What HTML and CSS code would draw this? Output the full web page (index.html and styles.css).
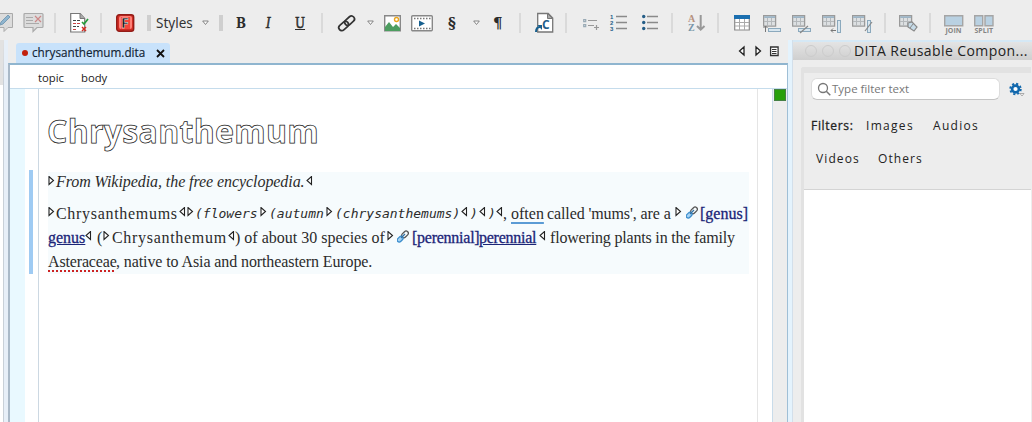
FILE: index.html
```html
<!DOCTYPE html>
<html lang="en">
<head>
<meta charset="utf-8">
<title>chrysanthemum.dita</title>
<link rel="stylesheet" href="styles.css">
</head>
<body>
<svg class="defs" width="0" height="0">
  <defs>
    <symbol id="open" viewBox="0 0 7 10"><path d="M1 .5v8l4.500-4z" fill="#fff" stroke="#222" stroke-width="1.100"/></symbol>
    <symbol id="close" viewBox="0 0 7 10"><path d="M5.500.5v8L1 4.500z" fill="#fff" stroke="#222" stroke-width="1.100"/></symbol>
    <symbol id="caret" viewBox="0 0 7 24"><path d="M.7 10h5.600L3.500 13.500z" fill="#fff" stroke="#777" stroke-width=".9"/></symbol>
    <symbol id="chain" viewBox="0 0 12 13"><g fill="none" stroke-width="1.300"><rect x="4" y="2" width="7.500" height="4.500" rx="2.200" transform="rotate(-45 8 4)" stroke="#555"/><rect x="0" y="6.500" width="6.500" height="4" rx="2" transform="rotate(-45 4 9)" stroke="#3b8dcc" fill="#a5d3f5"/><path d="M4 8l4-4" stroke="#3273a6"/></g></symbol>
    <symbol id="minitable" viewBox="0 0 14 12"><path d="M.6.6h12v10.500H.6z" fill="#dde0e2" stroke="#9a9a9a" stroke-width="1.300"/><path d="M1.200 1.200h10.800v1.800H1.200z" fill="#9db5c6"/><path d="M1 6.500h11M4.500 3v8M8.500 3v8" stroke="#b4b8bb"/></symbol>
  </defs>
</svg>
<div class="app">
  <header class="toolbar">
    <svg width="14" height="24"><path d="M-2 2.500h14.500v14H8l-4 4v-4h-6z" fill="#dcdcdc" stroke="#aaa"/><path d="M0 14l1-3 7-7 2 2-7 7z" fill="#8fb5cf" stroke="#7a9db5"/></svg>
    <svg width="21" height="24"><path d="M2 2.500h17q1 0 1 1v12q0 1-1 1h-5l-4 4v-4H2q-1 0-1-1v-12q0-1 1-1z" fill="#dcdcdc" stroke="#aaa" stroke-width="1.200"/><path d="M3 6.500h7M3 9.500h7M3 12.500h13" stroke="#aaa"/><path d="M12 5l6 6M18 5l-6 6" stroke="#c88" stroke-width="1.200"/></svg>
    <i class="sep"></i>
    <svg width="19" height="24"><path d="M.7 2.500h9.500l4.500 5v13.500H.7z" fill="#fff" stroke="#777" stroke-width="1.200"/><path d="M10 2.500v5h5" fill="#aaa" stroke="#777"/><path d="M3 9.500h3M7 9.500h3M3 15.500h3M7 15.500h2" stroke="#444"/><path d="M3 12.500h3M7 12.500h3M3 18.500h3" stroke="#c44"/><path d="M12 11l2 2 4-5" fill="none" stroke="#259b3b" stroke-width="1.700"/><path d="M12 16l4 4M16 16l-4 4" stroke="#d22c23" stroke-width="1.500"/></svg>
    <i class="sep"></i>
    <svg width="19" height="24"><rect x=".7" y="3.700" width="17" height="16.500" rx="2.500" fill="#cf2c24" stroke="#941d18" stroke-width="1.400"/><rect x="3" y="5" width="13" height="13" rx="2" fill="#ff8076"/><rect x="5" y="6" width="9" height="12" fill="#f3463c"/><text x="5" y="17" class="f-letter">F</text></svg>
    <i class="sep wide"></i>
    <span class="styles">Styles</span>
    <svg width="7" height="24"><use href="#caret"/></svg>
    <i class="sep wide"></i>
    <b class="fmt">B</b>
    <b class="fmt it">I</b>
    <b class="fmt un">U</b>
    <i class="sep"></i>
    <svg width="18" height="24"><g transform="rotate(-42 9 12)" fill="none" stroke="#333" stroke-width="1.700"><rect x="-1" y="9" width="11" height="6" rx="3"/><rect x="7" y="9" width="11" height="6" rx="3"/></g></svg>
    <svg width="7" height="24"><use href="#caret"/></svg>
    <svg width="18" height="24"><path d="M.7 4.700h15.600v15H.7z" fill="#fff" stroke="#888" stroke-width="1.400"/><path d="M1 18v-2l4-5 4 5 3-3 4 4v3H1z" fill="#4d9d60"/><circle cx="12.500" cy="8.500" r="2" fill="#fff" stroke="#eba51c" stroke-width="1.400"/></svg>
    <svg width="23" height="24"><rect x=".7" y="4.700" width="20.600" height="15" rx="1" fill="#fff" stroke="#888" stroke-width="1.400"/><path d="M3 7.500h17M3 17.500h17" stroke="#777" stroke-width="1.500" stroke-dasharray="1.500 1.500"/><path d="M8 9.500l6 3-6 3z" fill="#17608f"/></svg>
    <b class="fmt sect">§</b>
    <svg width="7" height="24"><use href="#caret"/></svg>
    <b class="fmt sect">¶</b>
    <i class="sep"></i>
    <svg width="18" height="24"><path d="M1.700 2.500h10.500l4.500 4.500v14H1.700z" fill="#fff" stroke="#777" stroke-width="1.300"/><path d="M11.500 2.500v5h5z" fill="#aaa" stroke="#777"/><path d="M0 21q0-5 4-5" fill="none" stroke="#17608f" stroke-width="2"/><path d="M1.500 14H6v5z" fill="#17608f"/><text x="6" y="18" class="c-letter">C</text></svg>
    <i class="sep"></i>
    <svg width="17" height="24"><path d="M.7 8.700h2v2h-2zM.7 13.700h2v2h-2z" fill="none" stroke="#9aabb6" stroke-width="1.200"/><path d="M5 9.500h9M5 14.500h6M11 16.500h5M13.500 14v5" stroke="#999" stroke-width="1.200"/></svg>
    <svg width="18" height="24"><path d="M6 5.500h11M6 11.500h11M6 17.500h11" stroke="#8a8a8a" stroke-width="1.300"/><g class="nums"><text x="0" y="8">1</text><text x="0" y="14">2</text><text x="0" y="20">3</text></g></svg>
    <svg width="17" height="24"><path d="M5 5.500h11M5 11.500h11M5 17.500h11" stroke="#8a8a8a" stroke-width="1.300"/><g fill="#245d87"><circle cx="1.700" cy="5.500" r="1.700"/><circle cx="1.700" cy="11.500" r="1.700"/><circle cx="1.700" cy="17.500" r="1.700"/></g></svg>
    <i class="sep"></i>
    <svg width="18" height="24"><text x="0" y="11" class="az" fill="#b6927f">A</text><text x="0" y="20" class="az" fill="#7895a8">Z</text><path d="M12.700 4v14M9 15l3.700 3.700L16.500 15" fill="none" stroke="#999" stroke-width="2"/></svg>
    <i class="sep"></i>
    <svg width="17" height="24"><path d="M.7 5h14.600v14H.7z" fill="#fff" stroke="#8a8a8a" stroke-width="1.200"/><path d="M0 4h16v4H0z" fill="#1b6fb0"/><path d="M1 11.500h14M1 15h14M5.500 8v11M10.500 8v11" stroke="#aaa"/></svg>
    <svg width="19" height="24"><use href="#minitable" y="4" width="14" height="12"/><rect x="5.500" y="17.500" width="12" height="3" fill="#d8e6ef" stroke="#8ba9bd"/><path d="M2.500 21v-6M.5 17l2-2 2 2" fill="none" stroke="#777"/></svg>
    <svg width="20" height="24"><use href="#minitable" y="4" width="14" height="12"/><rect x="6.500" y="17.500" width="12" height="3" fill="#d8e6ef" stroke="#8ba9bd"/><path d="M8 22l8-7" stroke="#888" stroke-width="1.200"/></svg>
    <svg width="20" height="24"><use href="#minitable" y="4" width="14" height="12"/><rect x="15.500" y="9.500" width="3" height="12" fill="#d8e6ef" stroke="#8ba9bd"/><path d="M14 19.500H9M11 17.500l-2 2 2 2" fill="none" stroke="#777"/></svg>
    <svg width="22" height="24"><use href="#minitable" y="4" width="14" height="12"/><rect x="15.500" y="9.500" width="3" height="12" fill="#d8e6ef" stroke="#8ba9bd"/><path d="M13 20l7-9" stroke="#888" stroke-width="1.200"/></svg>
    <i class="sep"></i>
    <svg width="20" height="24"><use href="#minitable" y="4" width="14" height="12"/><path d="M9 12l4-1 5 5-3 4-6-4z" fill="#c6dbe8" stroke="#888" stroke-width="1.200"/><path d="M11 17l3-4" stroke="#888"/></svg>
    <i class="sep"></i>
    <svg width="21" height="24"><path d="M.7 4.700h18v10H.7z" fill="#b9d1e2" stroke="#a5a5a5" stroke-width="1.400"/><text x="1.500" y="22" class="cap">JOIN</text></svg>
    <svg width="21" height="24"><path d="M.7 4.700h8v10h-8zM11 4.700h8v10h-8z" fill="#b9d1e2" stroke="#a5a5a5" stroke-width="1.400"/><text x=".5" y="22" class="cap">SPLIT</text></svg>
  </header>
  <div class="work">
    <div class="sidepane"></div>
    <main class="editor">
      <div class="tabs">
        <div class="tab"><i class="dirty"></i><span class="fname">chrysanthemum.dita</span><svg width="9" height="9"><path d="M1 1l7 7M8 1L1 8" stroke="#111" stroke-width="1.800"/></svg></div>
        <svg class="nav" width="42" height="12"><path d="M7 2v8L2.500 6zM19 2v8l4.500-4z" fill="#fff" stroke="#222" stroke-width="1.300"/><path d="M33.600 2h7.500v8.500h-7.500z" fill="#fff" stroke="#333" stroke-width="1.300"/><path d="M35 4.500h4.500M35 6.500h4.500M35 8.500h4.500" stroke="#333"/></svg>
      </div>
      <div class="frame">
        <nav class="crumbs"><span>topic</span><span>body</span></nav>
        <div class="canvas">
          <div class="gutter"></div>
          <div class="changes"><i></i></div>
          <article class="page">
            <h1>Chrysanthemum</h1>
            <section>
              <p class="line l1"><svg class="mk"><use href="#open"/></svg><em>From Wikipedia, the free encyclopedia.</em><svg class="mk"><use href="#close"/></svg></p>
              <p class="line l2"><svg class="mk"><use href="#open"/></svg><span class="spread">Chrysanthemums</span><svg class="mk"><use href="#close"/></svg><svg class="mk"><use href="#open"/></svg><code>(flowers</code><svg class="mk"><use href="#open"/></svg><code>(autumn</code><svg class="mk"><use href="#open"/></svg><code>(chrysanthemums)</code><svg class="mk"><use href="#close"/></svg><code>)</code><svg class="mk"><use href="#close"/></svg><code>)</code><svg class="mk"><use href="#close"/></svg><span>,</span><span class="gram">often</span><span class="called">called 'mums', are a</span><svg class="mk"><use href="#open"/></svg><svg class="ln"><use href="#chain"/></svg><a>[genus]</a></p>
              <p class="line l3"><a class="u">genus</a><svg class="mk"><use href="#close"/></svg><span>(</span><svg class="mk"><use href="#open"/></svg><span class="spread">Chrysanthemum</span><svg class="mk"><use href="#close"/></svg><span>) of about 30 species of</span><svg class="mk"><use href="#open"/></svg><svg class="ln"><use href="#chain"/></svg><a class="per">[perennial]</a><a class="u per">perennial</a><svg class="mk"><use href="#close"/></svg><span class="fam">flowering plants in the family</span></p>
              <p class="line l4"><span class="spell">Asteraceae</span><span class="native">, native to Asia and northeastern Europe.</span></p>
            </section>
          </article>
          <div class="margin"></div>
          <div class="ruler"><i></i></div>
        </div>
      </div>
    </main>
    <aside class="panel">
      <div class="titlebar"><i></i><i></i><i></i><span>DITA Reusable Compon...</span></div>
      <div class="body">
        <div class="filters">
          <div class="searchrow">
            <div class="search"><svg width="14" height="14"><circle cx="5" cy="6" r="4.500" fill="none" stroke="#777" stroke-width="1.300"/><path d="M8.300 9.300l4 4" stroke="#777" stroke-width="1.500"/></svg><span>Type filter text</span></div>
            <svg class="gear" width="17" height="16"><circle cx="6.500" cy="7" r="3.400" fill="#fff" stroke="#1268ad" stroke-width="2.600"/><circle cx="6.500" cy="7" r="5.300" fill="none" stroke="#1268ad" stroke-width="1.800" stroke-dasharray="2.160 2"/><path d="M11 11.500h4l-2 2.500z" fill="#fff" stroke="#999" stroke-width=".8"/></svg>
          </div>
          <div class="frow r1"><span class="flabel">Filters:</span><span>Images</span><span>Audios</span></div>
          <div class="frow r2"><span>Videos</span><span>Others</span></div>
        </div>
        <div class="results"></div>
      </div>
    </aside>
  </div>
</div>
</body>
</html>
```
FILE: styles.css
```css
* { box-sizing: border-box; }
body { margin: 0; background: #ededed; font-family: "Open Sans", "Noto Sans", sans-serif; color: #222; }
svg { display: block; overflow: visible; }
.defs { position: absolute; }
.app { width: 1032px; height: 422px; overflow: hidden; display: flex; flex-direction: column; }

.toolbar {
  height: 40px; padding-top: 11px; flex: none; display: grid; grid-template-rows: 24px;
  grid-template-columns: 23px 31px 16px 30px 16px 31px 9px 46px 17px 17px 30px 29px 26px 17px 29px 17px 27px 37px 25px 20px 26px 17px 29px 18px 27px 32px 29px 17px 29px 17px 29px 29px 30px 30px 32px 15px 30px 15px 30px 58px;
}
.sep { width: 2px; height: 20px; margin-top: 2px; background: #dadada; }
.sep.wide { width: 4px; height: 16px; margin-top: 4px; background: #cfcfcf; }
.styles { font: 13.5px/24px "Noto Sans", sans-serif; color: #333; }
.fmt { font: bold 14px/24px "DejaVu Serif", serif; color: #2c2c2c; transform: scaleX(.85); transform-origin: 0 0; }
.fmt.it { font-style: italic; font-weight: normal; -webkit-text-stroke: .5px #2c2c2c; }
.fmt.un { text-decoration: underline; font-weight: normal; -webkit-text-stroke: .5px #2c2c2c; }
.fmt.sect { font-size: 15px; transform: none; }
.f-letter { font: bold 14px "Open Sans", sans-serif; fill: #111; stroke: #fff; stroke-width: .4px; }
.c-letter { font: bold 12px "Open Sans", sans-serif; fill: #245f8c; }
.nums { font: bold 6px/1 "Liberation Sans", sans-serif; fill: #245d87; }
.az { font: bold 10px "Liberation Serif", serif; }
.cap { font: bold 7px "Open Sans", sans-serif; fill: #858585; }

.work { flex: 1; display: flex; min-height: 0; }
.sidepane { width: 4px; flex: none; border-right: 1px solid #c8d0d8; border-top: 45px solid #e2e2e2; background: #fff; }
.editor { width: 789px; flex: none; display: flex; flex-direction: column; padding-left: 4px; padding-right: 4px; border-right: 1px solid #d3dfea; background: linear-gradient(90deg, #e7eff8 4px, #ededed 4px, #ededed 784px, #e4f3fd 784px); }
.tabs { height: 23px; padding: 3px 9px 0 8px; display: flex; justify-content: space-between; }
.tab { width: 154px; height: 20px; padding-left: 6px; background: #c8e2fb; border-radius: 3px 3px 0 0; display: flex; align-items: center; }
.dirty { width: 6px; height: 6px; margin-right: 4px; border-radius: 50%; background: #c2200d; }
.fname { width: 124px; font-size: 11.700px; margin-top: -2px; color: #123; -webkit-text-stroke: .15px #123; }
.nav { margin-top: 2px; }
.frame { flex: 1; border: solid; border-color: #8fb5cf #9fbfd6 #9fbfd6 #a9b9c8; border-width: 2px 1px 0 2px; display: flex; flex-direction: column; min-height: 0; background: #fff; }
.crumbs { height: 24px; padding-left: 28px; display: flex; gap: 17px; border-bottom: 1px solid #c5dcec; font-size: 11.300px; line-height: 25px; }
.canvas { flex: 1; display: flex; }
.canvas > * { flex: none; }
.gutter { width: 15px; background: #e9f9ff; }
.changes { width: 14px; padding: 81px 0 0 4px; border-right: 1px solid #ccd8e2; }
.changes i { display: block; width: 4px; height: 104px; background: #9fcbf3; }
.page { width: 719px; padding-left: 9px; border-right: 1px solid #e5e5e5; }
h1 { margin: 21px 0 0 -1px; height: 62px; font: bold 32px/42px "Open Sans", "Noto Sans", sans-serif; letter-spacing: .3px; color: #fff; -webkit-text-stroke: .75px #222; }
section { width: 701px; height: 102px; background: #f6fbfd; font: 16px/24px "Liberation Serif", serif; }
.margin { width: 14px; }
.ruler { width: 15px; border-left: 1px solid #c9dcea; background: #ededed; padding-left: 1px; }
.ruler i { display: block; width: 12px; height: 12px; border: 1px solid #448044; background: #28a00b; }

.line { margin: 0; height: 24px; display: grid; white-space: nowrap; color: #2b2b2b; }
.l1 { height: 30px; line-height: 20px; grid-template-columns: 8px 250px 20px; }
.l2 { grid-template-columns: 8px 123px 8px 8px 65px 9px 57px 9px 126px 9px 9px 9px 8px 7px 8px 36px 128px 11px 14px 60px; }
.l3 { grid-template-columns: 37px 12px 6px 9px 116px 7px 152px 10px 15px 67px 60px 11px 199px; }
.l4 { grid-template-columns: 68px 600px; }
.mk { width: 7px; height: 10px; margin-top: 5px; }
.l1 .mk { margin-top: 4px; }
.ln { width: 12px; height: 13px; margin-top: 4px; }
.line em { letter-spacing: -.07px; }
.spread { letter-spacing: .7px; }
.called { letter-spacing: -.1px; }
.fam { letter-spacing: -.18px; }
.native { letter-spacing: -.1px; }
code { font: italic 13px/24px "DejaVu Sans Mono", monospace; }
a { color: #1b2578; -webkit-text-stroke: .3px #1b2578; }
.per { letter-spacing: -.25px; }
.u { text-decoration: underline; }
.gram { text-decoration: underline #5b9bd5 2px; text-underline-offset: 3px; }
.spell { letter-spacing: -.15px; text-decoration: underline dotted #c22 2px; text-underline-offset: 3px; }

.panel { width: 239px; flex: none; display: flex; flex-direction: column; }
.titlebar { height: 20px; flex: none; display: flex; align-items: center; border-top: 2px solid #d5e8f5; padding-left: 12px; background: linear-gradient(#e4e4e4, #cfcfcf); }
.titlebar i { width: 12px; height: 12px; margin-right: 5px; border: 1px solid #ccc; border-radius: 50%; flex: none; }
.titlebar span { font-size: 14px; letter-spacing: .42px; margin: -2px 0 0 -2px; white-space: nowrap; }
.body { flex: 1; margin: 7px 1px 0 8px; border: solid #e2e2e2; border-width: 6px 0 0 3px; border-radius: 3px 0 0; display: flex; flex-direction: column; }
.filters { height: 117px; flex: none; border-bottom: 1px solid #d4d4d4; padding: 5px 6px 0 7px; }
.searchrow { display: flex; justify-content: space-between; }
.search { width: 189px; height: 22px; padding-left: 6px; display: flex; align-items: center; background: #fff; border: 1px solid #ddd; border-bottom-color: #c4c4c4; border-radius: 6px; font-size: 11.500px; color: #777; }
.search span { margin-top: -1px; }
.gear { margin: 4px -1px 0 0; }
.frow { display: flex; font-size: 12px; line-height: 18px; }
.r1 { margin-top: 17px; }
.r1 span:nth-child(2) { width: 67px; letter-spacing: 1.300px; }
.r1 span:nth-child(3) { letter-spacing: 1.300px; }
.flabel { width: 55px; letter-spacing: .7px; -webkit-text-stroke: .3px #222; }
.r2 { margin: 15px 0 0 5px; letter-spacing: 1.100px; }
.r2 span { width: 62px; }
.results { flex: 1; background: #fff; }
```
